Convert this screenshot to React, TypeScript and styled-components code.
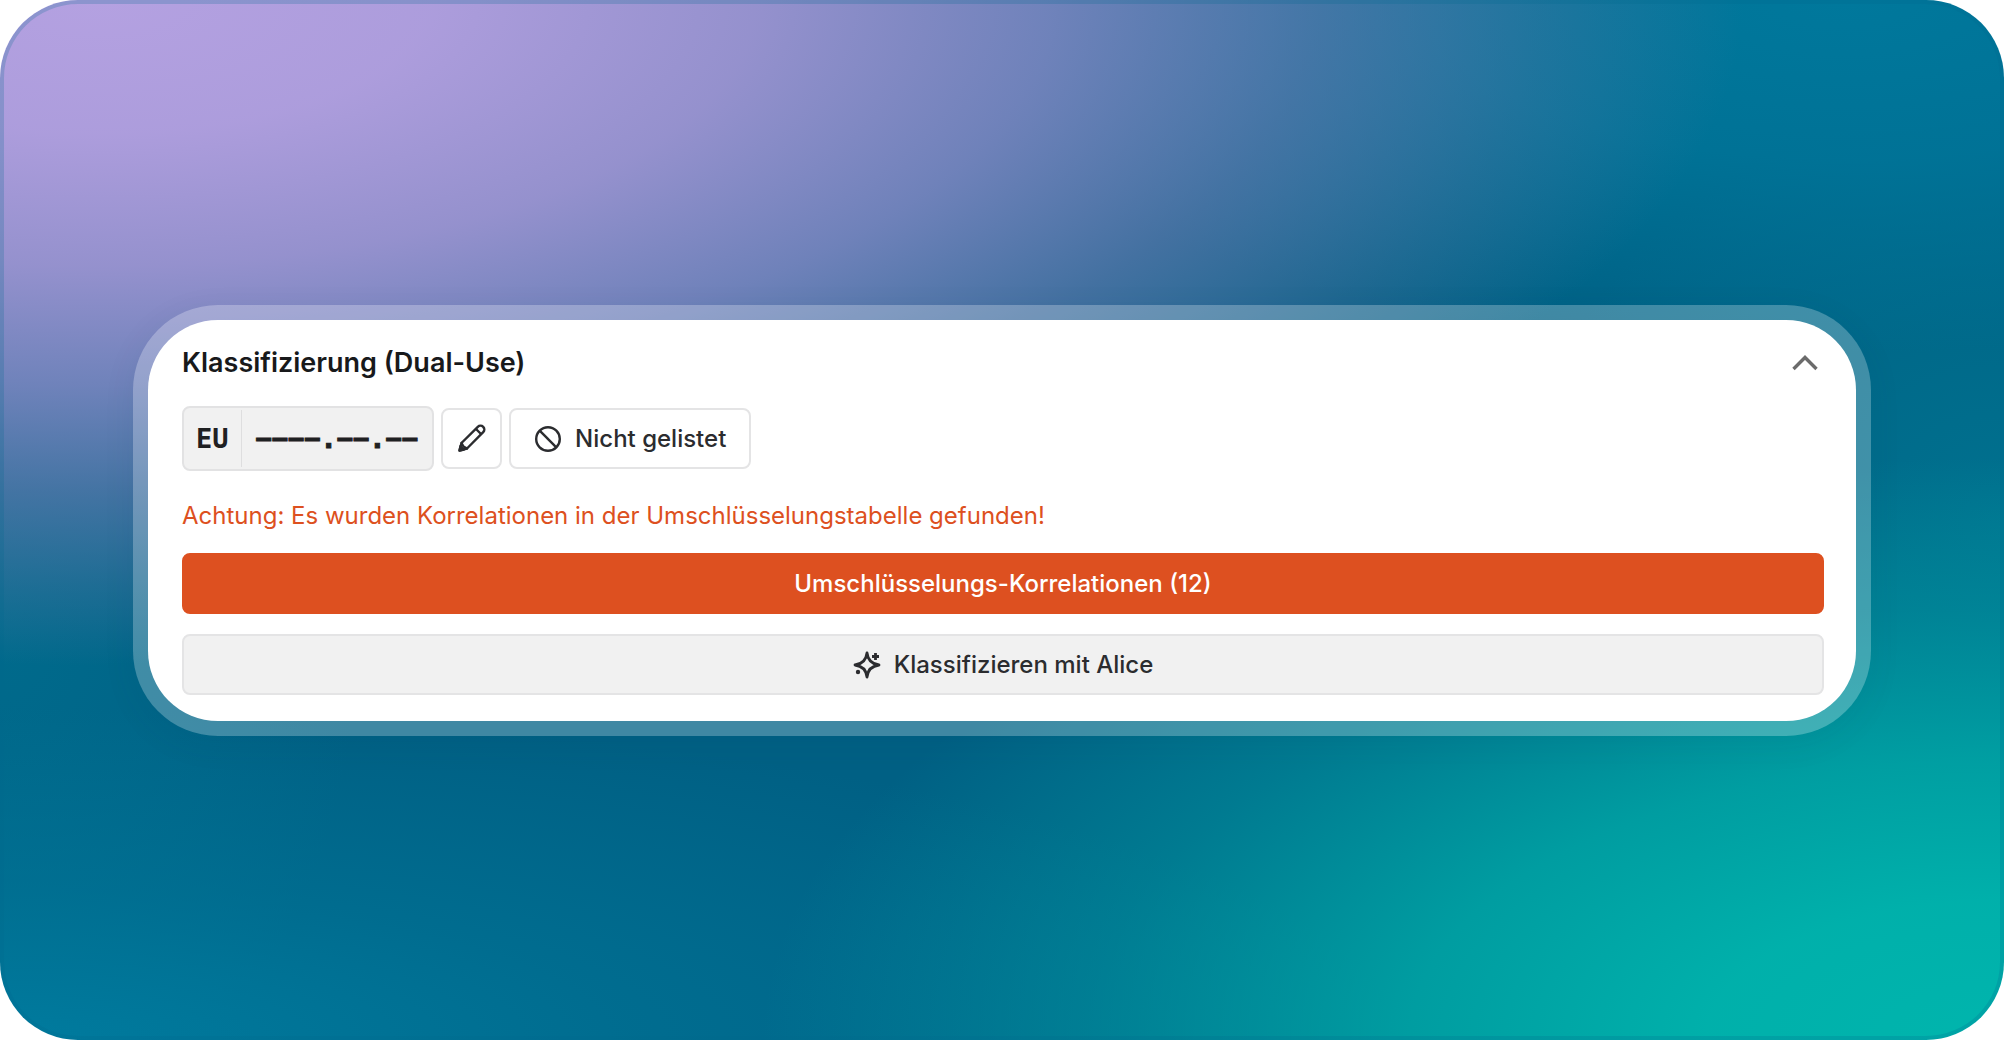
import React, { useState } from "react";
import styled, { createGlobalStyle } from "styled-components";

const GlobalStyle = createGlobalStyle`
  *, *::before, *::after { box-sizing: border-box; }
  body { margin: 0; background: #ffffff; font-family: Inter, "Liberation Sans", sans-serif; }
`;

const Stage = styled.main`
  min-height: 100vh;
  display: flex;
  flex-direction: column;
  justify-content: center;
  padding: 0 133px;
  border-radius: 78px;
  box-shadow: inset 0 0 0 4px rgba(0, 105, 140, 0.22);
  background:
    radial-gradient(ellipse 82% 64% at 5% 0%, #b4a1e1 0%, rgba(176, 158, 222, 0.98) 20%, rgba(158, 148, 210, 0.94) 40%, rgba(132, 136, 196, 0.84) 58%, rgba(112, 124, 180, 0.6) 74%, rgba(100, 120, 172, 0.3) 88%, rgba(90, 120, 170, 0) 100%),
    radial-gradient(ellipse 62% 56% at 100% 100%, #00b5ad 0%, rgba(0, 181, 173, 0.94) 24%, rgba(0, 178, 171, 0.74) 48%, rgba(0, 170, 168, 0.36) 74%, rgba(0, 160, 165, 0) 100%),
    radial-gradient(ellipse 70% 32% at 0% 100%, #007b9e 0%, rgba(0, 122, 156, 0.48) 45%, rgba(0, 122, 156, 0) 100%),
    radial-gradient(ellipse 46% 34% at 92% 0%, #00789c 0%, rgba(0, 120, 156, 0.75) 45%, rgba(0, 120, 156, 0) 100%),
    radial-gradient(ellipse 18% 50% at 0% 60%, rgba(0, 117, 148, 0.5) 0%, rgba(0, 117, 148, 0) 100%),
    radial-gradient(ellipse 24% 40% at 100% 50%, rgba(0, 125, 150, 0.6) 0%, rgba(0, 125, 150, 0) 100%),
    #006084;
`;

const Frame = styled.div`
  padding: 15px;
  border-radius: 85px;
  background: rgba(255, 255, 255, 0.25);
  box-shadow: 0 8px 32px rgba(0, 60, 90, 0.08);
`;

const Card = styled.section`
  display: flex;
  flex-direction: column;
  padding: 24px 32px 26px 34px;
  border-radius: 70px;
  background: #ffffff;
`;

const Header = styled.header`
  display: flex;
  align-items: center;
  justify-content: space-between;
  height: 38px;
`;

const Title = styled.h2`
  margin: 0;
  font-size: 27px;
  line-height: 38px;
  font-weight: 600;
  color: #18191b;
`;

const Toggle = styled.button<{ $open: boolean }>`
  display: flex;
  align-items: center;
  justify-content: center;
  width: 38px;
  height: 38px;
  padding: 0;
  border: 0;
  background: none;
  color: #6b6b6b;
  cursor: pointer;
  svg { transform: rotate(${(p) => (p.$open ? 0 : 180)}deg); }
`;

const Row = styled.div`
  display: flex;
  align-items: center;
  gap: 7px;
  margin-top: 24px;
`;

const Code = styled.div`
  display: flex;
  align-items: stretch;
  height: 65px;
  padding: 2px 0;
  border: 2px solid #e2e2e3;
  border-radius: 8px;
  background: #f1f1f1;
  color: #1f2022;
  font: 700 27px/57px "DejaVu Sans Mono", monospace;
`;

const Region = styled.span`
  padding: 0 12px;
  border-right: 1px solid #dededf;
`;

const Digits = styled.span`
  padding: 0 14px;
  -webkit-text-stroke: 1px currentColor;
`;

const Button = styled.button<{ $tone?: "plain" | "alert" | "soft"; $square?: boolean }>`
  display: flex;
  align-items: center;
  justify-content: center;
  gap: 13px;
  width: ${(p) => (p.$square ? "61px" : "auto")};
  height: 61px;
  padding: ${(p) => (p.$square ? "0" : "2px 23px 0")};
  border: 2px solid ${(p) => (p.$tone === "alert" ? "#dd5020" : "#e4e4e5")};
  border-radius: 8px;
  background: ${(p) => (p.$tone === "alert" ? "#dd5020" : p.$tone === "soft" ? "#f1f1f1" : "#ffffff")};
  color: ${(p) => (p.$tone === "alert" ? "#ffffff" : "#2b2c2f")};
  font: 500 24px/32px Inter, "Liberation Sans", sans-serif;
  cursor: pointer;
`;

const Warning = styled.p`
  margin: 29px 0 21px;
  font-size: 24px;
  line-height: 32px;
  color: #dd5020;
`;

const Actions = styled.div`
  display: flex;
  flex-direction: column;
  gap: 20px;
`;

const ChevronIcon = () => (
  <svg width="28" height="18" viewBox="0 0 28 18" fill="none" stroke="currentColor" strokeWidth="3.4" aria-hidden="true">
    <path d="M2.5 15 14 3.5 25.5 15" />
  </svg>
);

const PencilIcon = () => (
  <svg width="30" height="30" viewBox="0 0 30 30" fill="none" stroke="currentColor" strokeWidth="2.4" strokeLinejoin="round" strokeLinecap="round" aria-hidden="true">
    <path d="M4.5 20 20.8 3.8a3.7 3.7 0 0 1 5.4 5.4L10 25.5 6.500 23.5Z" />
    <path d="M19.5 6.5l4 4M4.5 20 2.5 27.5 10 25.5" />
    <path d="M2.5 27.5l1-4.500 3.500 3.500Z" fill="currentColor" />
  </svg>
);

const BanIcon = () => (
  <svg width="28" height="28" viewBox="0 0 28 28" fill="none" stroke="currentColor" strokeWidth="2.4" aria-hidden="true">
    <circle cx="14" cy="14" r="11.8" />
    <path d="M5.7 5.7 22.3 22.3" />
  </svg>
);

const SparkleIcon = () => (
  <svg width="28" height="28" viewBox="0 0 28 28" fill="none" stroke="currentColor" strokeWidth="2.8" strokeLinejoin="round" aria-hidden="true">
    <path d="M14 2c.8 7 4 11 12 12-8 1-11.2 5-12 12-.8-7-4-11-12-12 8-1 11.2-5 12-12Z" />
    <path d="M22.5 2v7M19 5.5h7" />
    <circle cx="5" cy="21" r="2.2" fill="currentColor" stroke="none" />
  </svg>
);

export default function App() {
  const [open, setOpen] = useState(true);
  return (
    <>
      <GlobalStyle />
      <Stage>
        <Frame>
          <Card>
            <Header>
              <Title>Klassifizierung (Dual-Use)</Title>
              <Toggle $open={open} aria-expanded={open} aria-label="Klassifizierung" onClick={() => setOpen(!open)}>
                <ChevronIcon />
              </Toggle>
            </Header>
            {open && (
              <>
                <Row>
                  <Code>
                    <Region>EU</Region>
                    <Digits>−−−−.−−.−−</Digits>
                  </Code>
                  <Button $square aria-label="Bearbeiten">
                    <PencilIcon />
                  </Button>
                  <Button>
                    <BanIcon />
                    Nicht gelistet
                  </Button>
                </Row>
                <Warning>Achtung: Es wurden Korrelationen in der Umschlüsselungstabelle gefunden!</Warning>
                <Actions>
                  <Button $tone="alert">Umschlüsselungs-Korrelationen (12)</Button>
                  <Button $tone="soft">
                    <SparkleIcon />
                    Klassifizieren mit Alice
                  </Button>
                </Actions>
              </>
            )}
          </Card>
        </Frame>
      </Stage>
    </>
  );
}
